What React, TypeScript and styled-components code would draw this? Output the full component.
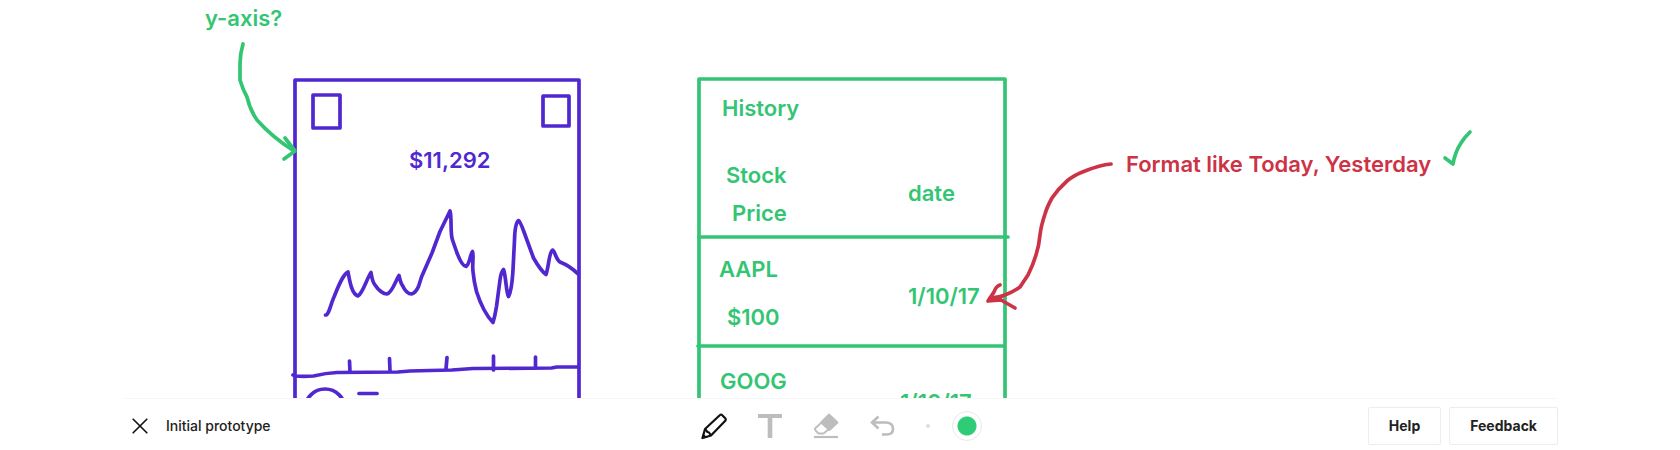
import React from "react";
import styled, { createGlobalStyle } from "styled-components";

const purple = "#5128cf";
const green = "#33c573";
const red = "#cd3346";

const GlobalStyle = createGlobalStyle`
  *, *::before, *::after { box-sizing: border-box; }
  body {
    margin: 0;
    background: #fff;
    color: #222;
    font-family: Inter, "Liberation Sans", sans-serif;
  }
`;

const Page = styled.div`
  display: flex;
  flex-direction: column;
  height: 100vh;
`;

const Canvas = styled.main`
  position: relative;
  flex: 1;
  min-height: 0;
  overflow: hidden;
`;

/* Zero point of the board: everything on it is placed from the centre line. */
const Origin = styled.div`
  position: absolute;
  top: 0;
  left: 50%;
`;

const Drawing = styled.svg`
  position: absolute;
  top: 0;
  left: 0;
  overflow: visible;
  fill: none;
  stroke-width: 3.7;
  stroke-linecap: round;
  stroke-linejoin: round;
`;

const Note = styled.span<{ $x: number; $y: number; $color: string }>`
  position: absolute;
  left: ${(p) => p.$x - 840}px;
  top: ${(p) => p.$y}px;
  color: ${(p) => p.$color};
  font-size: 22px;
  font-weight: 600;
  line-height: 28px;
  white-space: nowrap;
`;

const Toolbar = styled.footer`
  display: grid;
  grid-template-columns: 1fr auto 1fr;
  align-items: center;
  height: 52px;
  margin: 0 122px 0 124px;
  padding-top: 2px;
  border-top: 1px solid #f7f7f7;
`;

const TitleGroup = styled.div`
  display: flex;
  align-items: center;
  gap: 16px;
  padding-left: 6px;
`;

const Title = styled.h1`
  margin: 0;
  font-size: 14px;
  font-weight: 500;
  line-height: 20px;
`;

const Tools = styled.div`
  display: flex;
  align-items: center;
  gap: 28px;
`;

const IconButton = styled.button<{ $size?: number; $active?: boolean }>`
  display: flex;
  align-items: center;
  justify-content: center;
  width: ${(p) => p.$size ?? 28}px;
  height: 28px;
  padding: 0;
  border: 0;
  background: none;
  color: ${(p) => (p.$active ? "#111" : "#bdbdbd")};
`;

const ColorGroup = styled.div`
  display: flex;
  align-items: center;
  gap: 22px;
  padding-left: 2px;
`;

const SizeDot = styled.button`
  width: 4px;
  height: 4px;
  padding: 0;
  border: 0;
  border-radius: 50%;
  background: #dedede;
`;

const Swatch = styled.button`
  width: 30px;
  height: 30px;
  padding: 0;
  border: 1px solid #e9e9e9;
  border-radius: 50%;
  background: radial-gradient(circle, #2ecc76 9px, #fff 10px);
`;

const Actions = styled.div`
  display: flex;
  justify-content: flex-end;
  gap: 8px;
`;

const ActionButton = styled.button`
  height: 38px;
  padding: 0 20px;
  border: 1px solid #ededed;
  border-radius: 2px;
  background: #fff;
  color: #222;
  font: 700 14px/20px Inter, "Liberation Sans", sans-serif;
`;

const notes = [
  { text: "y-axis?", x: 205, y: 4, color: green },
  { text: "$11,292", x: 409, y: 146, color: purple },
  { text: "History", x: 722, y: 94, color: green },
  { text: "Stock", x: 726, y: 161, color: green },
  { text: "Price", x: 732, y: 199, color: green },
  { text: "date", x: 908, y: 179, color: green },
  { text: "AAPL", x: 719, y: 255, color: green },
  { text: "$100", x: 727, y: 303, color: green },
  { text: "1/10/17", x: 908, y: 282, color: green },
  { text: "GOOG", x: 720, y: 367, color: green },
  { text: "1/10/17", x: 900, y: 388, color: green },
  { text: "Format like Today, Yesterday", x: 1126, y: 150, color: red },
];

function Sketch() {
  return (
    <Drawing width="1" height="1" viewBox="840 0 1 1" aria-hidden="true">
      <g stroke={purple}>
        <path d="M295 420V80H579V420" />
        <path d="M313 95H340V128H313Z" />
        <path d="M543 96H569V126H543Z" />
        <path d="M325.5 315C329 315 331 303 334 297C338 287 343 274 348 272C350 283 352 294 358 296C363 293 367 278 371 272.5C372 279 373 283 375 285C379 291 384 294 387 294C392 293 396 280 399 275.5C400 280 401 284 402.5 285.5C405 291 408 294 411.5 294C415 293 417 290 418.5 286.5L421.5 277L432 253L440 231.5L450 211C452 217 450 234 452.5 240L457 253Q462 266 466 266.5C470 264 470 254 472.5 251.5C474 257 472 264 473 271.5Q474 282 476.5 291.5Q483 312 493 322.5Q495 316 496.5 306.5L500 280Q501 272 503.5 269.5C506 276 506 292 508.5 296.5C512 290 512.5 277 513 270L514.5 240Q515 223 518.5 220.5Q520 221 524 232L533.5 258Q541 271 546 274.5C549 266 549 252 552.5 250C555 251 556 260 560 262C565 264 572 268 577.5 273.5" />
        <path d="M293 375Q295 377 313.5 376Q326 373 337 372.5L398 372L410 371L430 370.5L452 370L473 368.5L551.5 368L557 367H578" />
        <path d="M349.5 361L350 372M389.5 358.5L390 371M447 357.5L446 369M493.5 356V370M535.5 357V367" />
        <circle cx="325" cy="409" r="20" />
        <path d="M359 393.5H377" />
      </g>
      <g stroke={green}>
        <path d="M243 44Q240 54 240 64V80Q243 90 247 97Q250 110 257 120Q272 137 294 151" />
        <path d="M285 138L295 151L284 159" />
        <path d="M699 420V79H1005V420" />
        <path d="M699 237H1008M698 346H1004" />
        <path d="M1445 158L1453 164Q1455 152 1461 143Q1464 138 1470 132" />
      </g>
      <g stroke={red}>
        <path d="M1111 164Q1100 165 1085 171Q1074 175 1067 181Q1058 189 1052 198Q1047 207 1045 214Q1041 226 1040 235Q1039 246 1036 255Q1033 265 1028 275L1020 287Q1013 292 1005 295Q998 298 990 298" />
        <path d="M1000 285Q996 286 994 292L988 301L1001 300L1015 308M988 301L1001 297" />
      </g>
    </Drawing>
  );
}

export default function App() {
  return (
    <Page>
      <GlobalStyle />
      <Canvas>
        <Origin>
          <Sketch />
          {notes.map((n) => (
            <Note key={`${n.x}-${n.y}`} $x={n.x} $y={n.y} $color={n.color}>
              {n.text}
            </Note>
          ))}
        </Origin>
      </Canvas>
      <Toolbar>
        <TitleGroup>
          <IconButton $size={20} $active aria-label="Close">
            <svg width="16" height="16" viewBox="0 0 16 16" fill="none" stroke="currentColor" strokeWidth="1.6">
              <path d="M.7.7L15.3 15.3M15.3.7L.7 15.3" />
            </svg>
          </IconButton>
          <Title>Initial prototype</Title>
        </TitleGroup>
        <Tools>
          <IconButton $active aria-label="Pen">
            <svg width="28" height="28" viewBox="0 0 28 28" fill="none" stroke="currentColor" strokeWidth="2.2" strokeLinejoin="round">
              <path d="M2.500 26L5 17L20 3Q21 2 22 3L25.500 6.500Q26 7.500 25.500 8.500L11 23.500Z" />
              <path d="M5 17L7.500 20L9 20.500L11 23.500" />
              <path d="M1.500 27L3 21.500L7.500 25.500Z" fill="currentColor" stroke="none" />
            </svg>
          </IconButton>
          <IconButton aria-label="Text">
            <svg width="28" height="28" viewBox="0 0 28 28" fill="currentColor">
              <path d="M2 2H26V6H16.300V26H11.700V6H2Z" />
            </svg>
          </IconButton>
          <IconButton aria-label="Eraser">
            <svg width="28" height="28" viewBox="0 0 28 28" fill="none" stroke="currentColor" strokeWidth="1.800" strokeLinejoin="round">
              <path d="M9 11L3 16.500Q2.500 17.500 3.500 18.500L6.500 21.500H11.500L17 17" />
              <path d="M17 2.500L25.500 10.500L17.500 18L9 10.500Z" fill="currentColor" />
              <path d="M2 25H26" strokeWidth="2.200" />
            </svg>
          </IconButton>
          <IconButton aria-label="Undo">
            <svg width="28" height="28" viewBox="0 0 28 28" fill="none" stroke="currentColor" strokeWidth="2.600">
              <path d="M10.500 4.500L4 10.500L10.500 16.500M4 10.500H18.500Q25 11 25 17Q25 22.500 18.500 22.500H14" />
            </svg>
          </IconButton>
          <ColorGroup>
            <SizeDot aria-label="Stroke size" />
            <Swatch aria-label="Stroke color" />
          </ColorGroup>
        </Tools>
        <Actions>
          <ActionButton>Help</ActionButton>
          <ActionButton>Feedback</ActionButton>
        </Actions>
      </Toolbar>
    </Page>
  );
}
